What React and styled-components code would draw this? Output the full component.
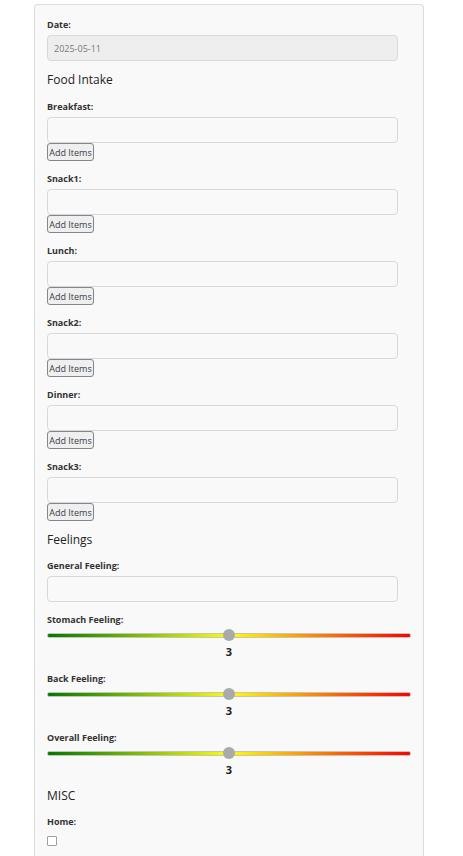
import React from 'react';
import styled, { createGlobalStyle } from 'styled-components';

const GlobalStyle = createGlobalStyle`
  body {
    margin: 0;
    background: #ffffff;
    font-family: "Open Sans", "Liberation Sans", sans-serif;
  }
`

const meals = ['Breakfast', 'Snack1', 'Lunch', 'Snack2', 'Dinner', 'Snack3'];
const sliders = ['Stomach Feeling', 'Back Feeling', 'Overall Feeling'];

const App = () => {
  return (
    <>
      <GlobalStyle />
      <Panel>
        <Label first>Date:</Label>
        <TextInput disabled value="2025-05-11" readOnly />

        <Heading>Food Intake</Heading>
        {meals.map((meal) => (
          <Field key={meal}>
            <Label>{meal}:</Label>
            <TextInput />
            <AddButton type="button">Add Items</AddButton>
          </Field>
        ))}

        <Heading>Feelings</Heading>
        <Label>General Feeling:</Label>
        <TextInput />

        {sliders.map((name) => (
          <Field key={name}>
            <Label>{name}:</Label>
            <Range type="range" min="1" max="5" defaultValue="3" />
            <RangeValue>3</RangeValue>
          </Field>
        ))}

        <Heading $top={9}>MISC</Heading>
        <Label>Home:</Label>
        <Check type="checkbox" />
      </Panel>
    </>
  )
}

const Panel = styled.div`
  box-sizing: border-box;
  width: 390px;
  margin: 4px 0 0 34px;
  min-height: 860px;
  padding: 13px 12px 20px 12px;
  background: #f9f9f9;
  border: 1px solid #dcdcdc;
  border-bottom: none;
  border-radius: 4px 4px 0 0;
`

const Field = styled.div`
  display: flex;
  flex-direction: column;
  align-items: flex-start;
`

const Label = styled.label`
  display: block;
  margin: ${(p) => (p.first ? '1px' : '12px')} 0 4px 0;
  font-size: 9px;
  line-height: 12px;
  font-weight: 700;
  color: #333;
`

const Heading = styled.h3`
  margin: ${(p) => p.$top ?? 11}px 0 1px 0;
  font-size: 12px;
  line-height: 16px;
  font-weight: 400;
  color: #222;
`

const TextInput = styled.input`
  display: block;
  box-sizing: border-box;
  width: 351px;
  height: 26px;
  padding: 0 6px;
  font-family: inherit;
  font-size: 9px;
  color: #777;
  background: ${(p) => (p.disabled ? '#eeeeee' : '#f9f9f9')};
  border: 1px solid #d8d8d8;
  border-radius: 4px;
  outline: none;
`

const AddButton = styled.button`
  box-sizing: border-box;
  height: 18px;
  width: 47px;
  padding: 0;
  font-family: inherit;
  font-size: 9px;
  color: #3a3a4a;
  background: #efefef;
  border: 1px solid #85858f;
  border-radius: 3px;
`

const Range = styled.input`
  -webkit-appearance: none;
  appearance: none;
  width: 100%;
  height: 10px;
  margin: 0;
  padding: 0;
  background: transparent;

  &::-webkit-slider-runnable-track {
    height: 5px;
    box-sizing: border-box;
    border: 1px solid #c4c4c4;
    border-radius: 2px;
    background: linear-gradient(to right, #007a00, #ffff00 50%, #ff0000);
  }

  &::-webkit-slider-thumb {
    -webkit-appearance: none;
    width: 12px;
    height: 12px;
    margin-top: -4.5px;
    border-radius: 50%;
    background: #aaaaaa;
    border: none;
  }
`

const RangeValue = styled.div`
  align-self: center;
  margin: 5px 0 2px 0;
  font-size: 11px;
  line-height: 14px;
  font-weight: 700;
  color: #222;
`

const Check = styled.input`
  -webkit-appearance: none;
  appearance: none;
  display: block;
  box-sizing: border-box;
  width: 10px;
  height: 10px;
  margin: 8px 0 0 0;
  background: #fff;
  border: 1px solid #a0a0a0;
  border-radius: 1px;
`

export default App
